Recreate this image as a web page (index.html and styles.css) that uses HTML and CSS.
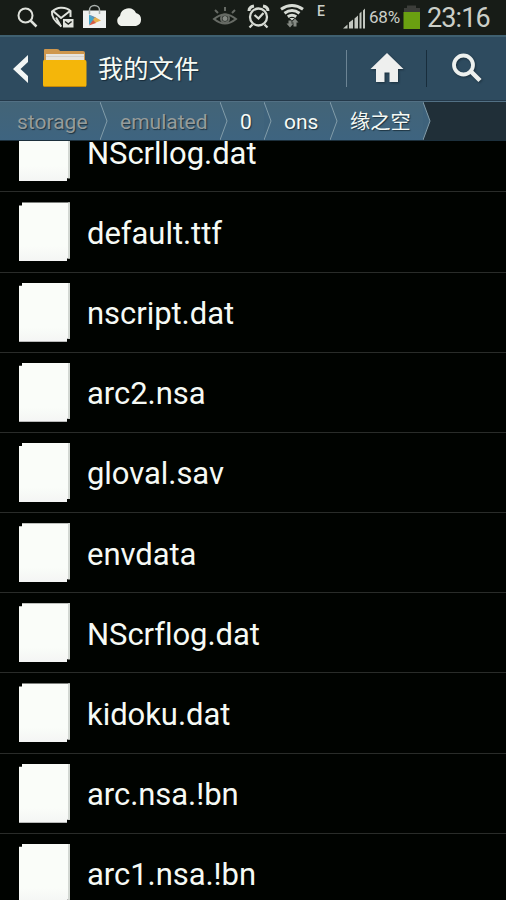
FILE: index.html
```html
<!DOCTYPE html>
<html lang="zh-CN">
<head>
<meta charset="utf-8">
<title>我的文件</title>
<link rel="stylesheet" href="styles.css">
</head>
<body>
<div class="status">
  <svg class="status-icons" width="506" height="35" viewBox="0 0 506 35">
    <g fill="none" stroke="#dfe2dc" stroke-width="2">
      <circle cx="25.500" cy="15.500" r="7"/><path d="M30.500 20.500l6 6" stroke-width="2.500"/>
      <path d="M61.500 26.500Q51 19 52 11.500 57 7.500 61 7.800 67 7.500 70.500 11v6M53 11l8 7 9-7M61 26.500l-5-9"/>
    </g>
    <rect x="63" y="19" width="10.500" height="8.500" fill="#e2e5df"/><path d="M65 21.500l3.300 2.500 3.300-2.500" fill="none" stroke="#20241f" stroke-width="1.500"/>
    <path d="M83 10.500h23V28H83z" fill="#eef1f0"/>
    <path d="M89.500 14V10a5 4.500 0 0 1 10 0v4" fill="none" stroke="#a9b0ad" stroke-width="1.500"/>
    <path d="M89 14.500l6 5.500-6 5z" fill="#43a6ca"/><path d="M89 14.500l7 3-2 2z" fill="#5b8cb0"/><path d="M95 17l6 3.500-6 2.500-2-3z" fill="#e6ae4c"/><path d="M93 20l3 3-7 2.500z" fill="#d75d45"/>
    <path d="M121 26a5.500 5.500 0 0 1-1-10 8.500 8.500 0 0 1 16-3 6.700 6.700 0 0 1 0 13z" fill="#f0f2ed"/>
    <g fill="none" stroke="#666a64" stroke-width="2">
      <path d="M214 19q11-9 22 0-11 9-22 0z"/><path d="M215 10l3 3M225 7v4M235 10l-3 3"/>
      <circle cx="225" cy="18.500" r="4"/>
    </g>
    <circle cx="225" cy="18.500" r="2.500" fill="#858983"/>
    <g fill="none" stroke="#d7dbd4" stroke-width="2.300">
      <circle cx="258.500" cy="17" r="8.500"/><path d="M254.500 15l4 3.500 5-5.500M252.500 24.500l-3 3M264.500 24.500l3 3"/>
      <path d="M249 11q0-4 5-5M268 11q0-4-5-5" stroke-width="3"/>
      <path d="M281 9.200q11-7.500 22 0M284.500 13.200q7.500-5.500 15 0M287.800 16.800q4.200-3 8.400 0" stroke-width="3"/>
    </g>
    <path d="M289.500 18h5l-2.500 2.500z" fill="#d7dbd4"/>
    <path d="M286.500 23.500h2v-3h3v3h2l-3.500 4zM291.500 22.500l3.500-4 3.500 4h-2v4h-3v-4z" fill="#858983"/>
    <path d="M343 28.500l4.500-4v4zM349 28.500v-6l4-3v9zM354.500 28.500v-10l3.500-3v13zM359.500 28.500v-15l2-2v17zM363 28.500V10.500l2-2v20z" fill="#c3c7c0"/>
    <path d="M404 8h3V5.500h9V8h4v4h-16z" fill="#3b3d39"/><path d="M403.500 12h16.500v17h-16.500z" fill="#6aa011"/>
  </svg>
  <span class="edge">E</span><span class="percent">68%</span><span class="clock">23:16</span>
</div>
<header class="bar">
  <svg class="back" width="16" height="28" viewBox="0 0 16 28"><path d="M15 0v7L7.500 14l7.500 7v7L0 14z" fill="#f3f6f5"/></svg>
  <svg class="folder" width="46" height="39" viewBox="0 0 46 39">
    <path d="M2 1q0-1 1-1h12q2 0 3 2h23q2 0 2 2v9H2z" fill="#cf974d"/>
    <path d="M4 5h38v8H4z" fill="#e7e4de"/><path d="M4 7.500h38" stroke="#d5d1ca"/>
    <path d="M2 11h41q1.500 0 1.500 2v23q0 2-2 2H3q-2 0-2-2V13q0-2 1-2z" fill="#f4b60a"/>
    <path d="M2 37.500h41" stroke="#c58808"/>
  </svg>
  <h1 class="title">我的文件</h1>
  <div class="action home">
    <svg width="34" height="30" viewBox="0 0 34 30"><path d="M17 0l16.500 16H28v13h-8.500V19.500h-5V29H6V16H.500z" fill="#eeefee"/></svg>
  </div>
  <div class="action search">
    <svg width="32" height="32" viewBox="0 0 32 32" fill="none" stroke="#edf0ee"><circle cx="12.500" cy="13" r="9.500" stroke-width="3.800"/><path d="M19.500 19l9.500 9.500" stroke-width="4.500"/></svg>
  </div>
</header>
<nav class="crumbs">
  <div class="crumb storage dim"><span>storage</span><svg class="tip" width="9" height="38" viewBox="0 0 9 38"><path d="M0 0l7 19-7 19z" fill="#3e627b"/><path d="M0 0l7 19-7 19" fill="none" stroke="#829ca9"/></svg></div>
  <div class="crumb emulated dim"><span>emulated</span><svg class="tip" width="9" height="38" viewBox="0 0 9 38"><path d="M0 0l7 19-7 19z" fill="#3e627b"/><path d="M0 0l7 19-7 19" fill="none" stroke="#829ca9"/></svg></div>
  <div class="crumb zero"><span>0</span><svg class="tip" width="9" height="38" viewBox="0 0 9 38"><path d="M0 0l7 19-7 19z" fill="#3e627b"/><path d="M0 0l7 19-7 19" fill="none" stroke="#829ca9"/></svg></div>
  <div class="crumb ons"><span>ons</span><svg class="tip" width="9" height="38" viewBox="0 0 9 38"><path d="M0 0l7 19-7 19z" fill="#3e627b"/><path d="M0 0l7 19-7 19" fill="none" stroke="#829ca9"/></svg></div>
  <div class="crumb last"><span>缘之空</span><svg class="tip" width="9" height="38" viewBox="0 0 9 38"><path d="M0 0l7 19-7 19z" fill="#3e627b"/><path d="M0 0l7 19-7 19" fill="none" stroke="#829ca9"/></svg></div>
</nav>
<main class="viewport">
  <ul class="files">
    <li><i class="page"></i><span>NScrllog.dat</span></li>
    <li><i class="page"></i><span>default.ttf</span></li>
    <li><i class="page"></i><span>nscript.dat</span></li>
    <li><i class="page"></i><span>arc2.nsa</span></li>
    <li><i class="page"></i><span>gloval.sav</span></li>
    <li><i class="page"></i><span>envdata</span></li>
    <li><i class="page"></i><span>NScrflog.dat</span></li>
    <li><i class="page"></i><span>kidoku.dat</span></li>
    <li><i class="page"></i><span>arc.nsa.!bn</span></li>
    <li><i class="page"></i><span>arc1.nsa.!bn</span></li>
  </ul>
</main>
</body>
</html>
```
FILE: styles.css
```css
* { box-sizing: border-box; }
body {
  margin: 0;
  width: 506px;
  height: 900px;
  overflow: hidden;
  display: flex;
  flex-direction: column;
  background: #000300;
  color: #f6faf5;
  font-family: Roboto, "Noto Sans CJK SC", sans-serif;
  font-variant-ligatures: none;
}
.status {
  position: relative;
  flex: none;
  height: 35px;
  display: flex;
  padding-left: 317px;
  background: #171c17;
  color: #cbcfc8;
  white-space: nowrap;
}
.status-icons { position: absolute; left: 0; top: 0; }
.edge { width: 52px; font-size: 14px; line-height: 22px; font-weight: 500; }
.percent { width: 58px; font-size: 17px; line-height: 35px; letter-spacing: -.2px; }
.clock { font-size: 27px; line-height: 37px; letter-spacing: -.9px; }
.bar {
  flex: none;
  height: 66px;
  display: flex;
  align-items: center;
  padding-left: 13px;
  background: #2e4b5f;
  border-top: 2px solid #3f6070;
  border-bottom: 1px solid #24394a;
}
.back { margin-right: 13px; }
.folder { margin-right: 10px; }
.title {
  margin: 0;
  padding-top: 2px;
  width: 248px;
  font-size: 25.300px;
  line-height: 38px;
  font-weight: 400;
  text-shadow: 1px 1px 1px #172b39;
}
.action { height: 37px; display: flex; align-items: center; }
.home { width: 80px; padding-left: 23px; border-left: 1px solid #6c8494; }
.search { width: 80px; padding-left: 24px; border-left: 1px solid #182d3c; }
.action svg { margin-bottom: 2px; filter: drop-shadow(1px 1px 1px #1b303e); }
.crumbs {
  flex: none;
  height: 40px;
  display: flex;
  background: #202f38;
  border-top: 1px solid #527084;
  border-bottom: 1px solid #1c303c;
}
.crumb {
  position: relative;
  height: 38px;
  background: linear-gradient(#436477, #3e6480);
  font-size: 21px;
  line-height: 40px;
  text-shadow: 1px 1px 1px #1d3341;
  white-space: nowrap;
}
.tip { position: absolute; left: 100%; top: 0; z-index: 1; }
.dim { color: #969c9b; }
.storage { width: 100px; padding-left: 17px; }
.emulated { width: 120px; padding-left: 20px; }
.zero { width: 44px; padding-left: 20px; }
.ons { width: 66px; padding-left: 20px; }
.last { width: 93px; padding-left: 20px; font-size: 20.200px; line-height: 41px; }
.viewport { flex: 1; min-height: 0; overflow: hidden; }
.files { list-style: none; margin: -28.800px 0 0; padding: 0; }
.files li {
  height: 80.180px;
  display: flex;
  align-items: center;
  gap: 17px;
  padding-left: 18px;
  border-bottom: 1px solid #292c29;
  font-size: 31px;
  line-height: 38px;
  white-space: nowrap;
}
.files span { padding-top: 4px; letter-spacing: -.050px; }
.page {
  width: 52px;
  height: 59px;
  background: linear-gradient(#fafdf9 0 75%, #f4f5f4);
  box-shadow: inset -2px 0 #d3d8d3;
  clip-path: polygon(4px 0, 100% 0, 100% 56px, 49px 56px, 49px 100%, 1px 100%, 1px 3px, 4px 3px);
}
```
